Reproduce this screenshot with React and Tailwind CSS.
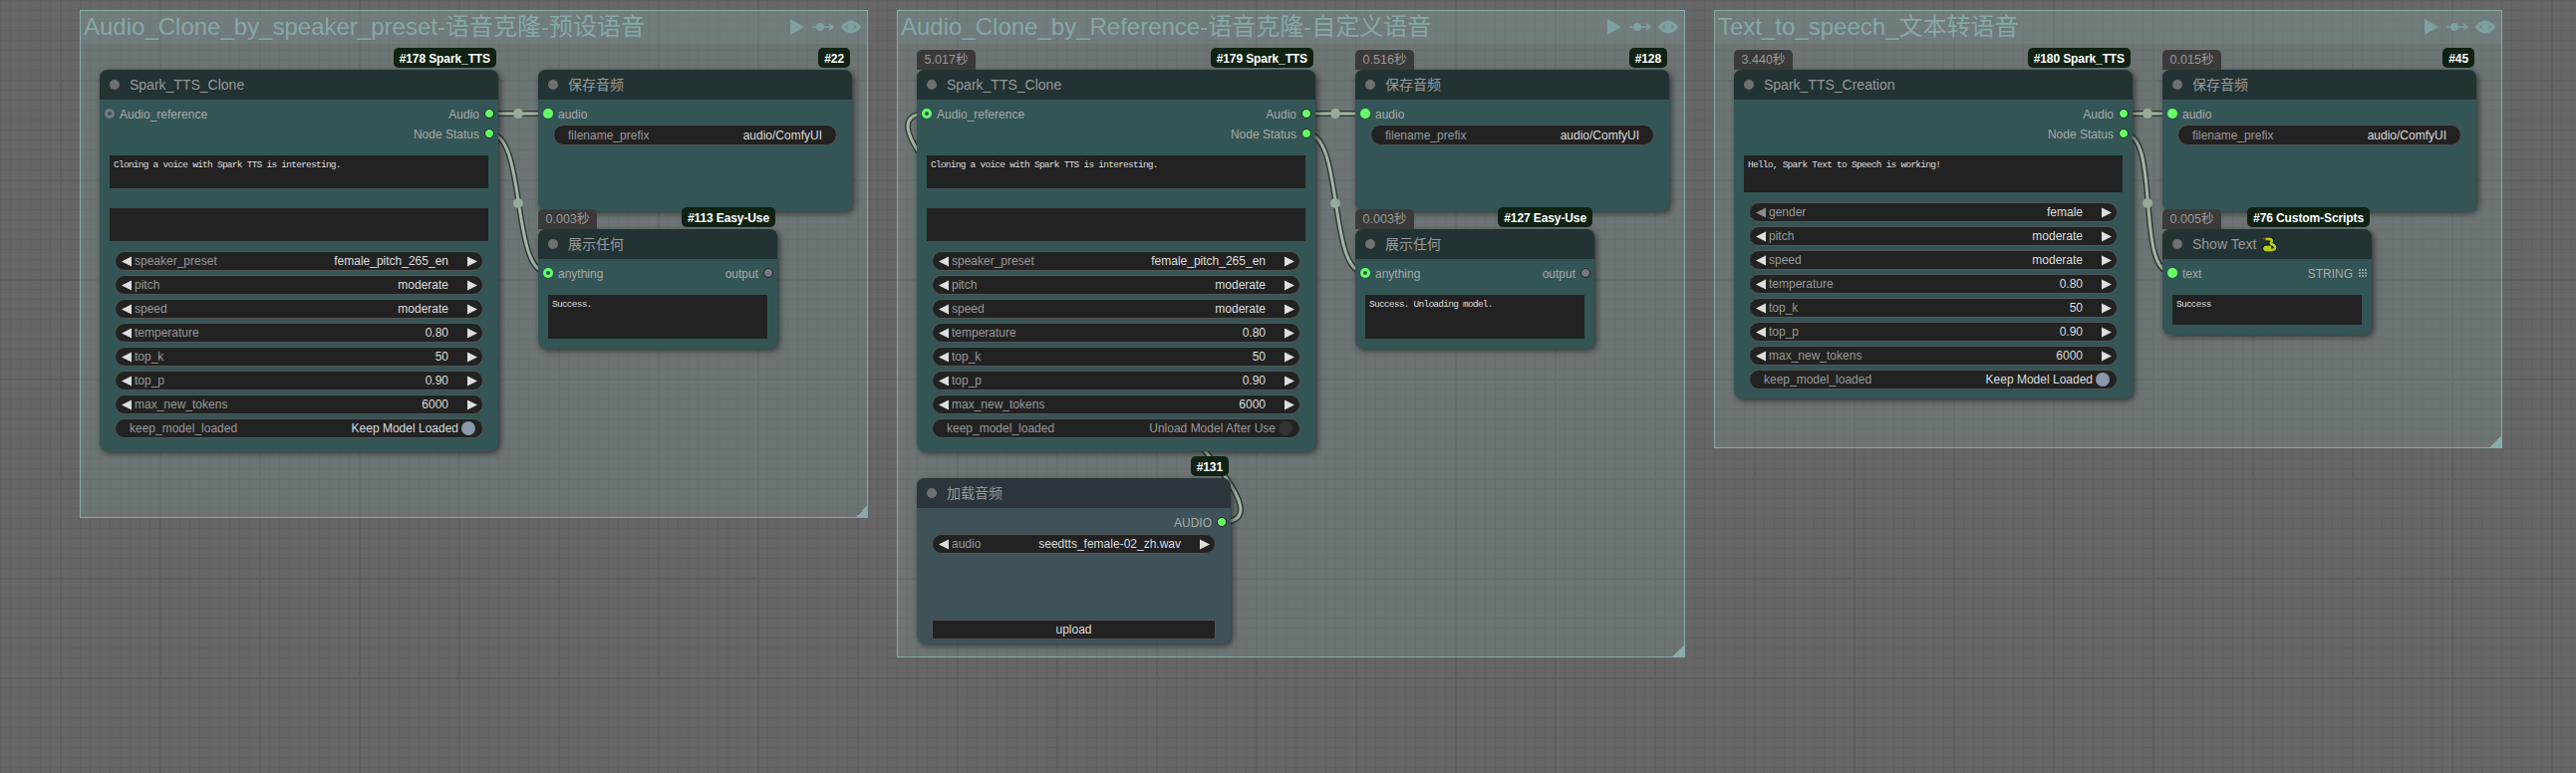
import React from "react";

const FONT = "[font-family:'Liberation_Sans','Noto_Sans_CJK_SC',sans-serif]";

function Triangle({ dir, dim }) {
  return (
    <svg width="10" height="11" viewBox="0 0 10 11" className="shrink-0">
      <polygon points={dir === "l" ? "0,5.5 10,0.5 10,10.5" : "0,0.5 10,5.5 0,10.5"} fill={dim ? "#8a8a8a" : "#dddddd"} />
    </svg>
  );
}

function Widget({ label, value, dimLeft }) {
  return (
    <div className="mx-[15px] mb-[4px] flex h-[20px] items-center rounded-full border border-[#555] bg-[#222] pl-[6px] pr-[5px] text-[12px]">
      <Triangle dir="l" dim={dimLeft} />
      <span className="ml-[3px] text-[#999]">{label}</span>
      <span className="ml-auto text-[#ddd]">{value}</span>
      <span className="ml-[19px]"><Triangle dir="r" /></span>
    </div>
  );
}

function Toggle({ value, on }) {
  return (
    <div className="mx-[15px] flex h-[20px] items-center rounded-full border border-[#555] bg-[#222] pl-[14px] pr-[7px] text-[12px]">
      <span className="text-[#999]">keep_model_loaded</span>
      <span className={on ? "ml-auto text-[#ddd]" : "ml-auto text-[#999]"}>{value}</span>
      <span className={on ? "ml-[3px] h-[14px] w-[14px] rounded-full bg-[#8899aa]" : "ml-[3px] h-[14px] w-[14px] rounded-full bg-[#333]"} />
    </div>
  );
}

function PlainField({ label, value }) {
  return (
    <div className="mx-[15px] mt-[1px] flex h-[21px] items-center justify-between rounded-full border border-[#555] bg-[#222] px-[14px] text-[12px]">
      <span className="text-[#999]">{label}</span>
      <span className="text-[#ddd]">{value}</span>
    </div>
  );
}

function Text({ h, mt = "mt-[12px]", children }) {
  return (
    <div className={`mx-[10px] ${mt} ${h} overflow-hidden bg-[#222] px-[4px] py-[3px] text-[9.5px] leading-[13px] tracking-[-0.75px] text-[#ddd] [font-family:'Liberation_Mono',monospace]`}>
      {children}
    </div>
  );
}

function Dot({ kind }) {
  if (kind === "open")
    return <span className="flex h-[10px] w-[10px] items-center justify-center rounded-full bg-[#778]"><span className="h-[4px] w-[4px] rounded-full bg-[#355]" /></span>;
  if (kind === "in")
    return <span className="flex h-[10px] w-[10px] items-center justify-center rounded-full bg-[#66ff66]" />;
  if (kind === "ring")
    return <span className="flex h-[10px] w-[10px] items-center justify-center rounded-full bg-[#66ff66]"><span className="h-[4px] w-[4px] rounded-full bg-[#355]" /></span>;
  if (kind === "grey")
    return <span className="h-[10px] w-[10px] rounded-full border border-[#222] bg-[#778]" />;
  if (kind === "grid")
    return <span className="mx-[1px] grid h-[8px] w-[8px] grid-cols-3 gap-[1px]">{Array.from({ length: 9 }).map((_, i) => <span key={i} className="bg-[#8a9a9a]" />)}</span>;
  return <span className="h-[10px] w-[10px] rounded-full border border-[#222] bg-[#66ff66]" />;
}

function Slots({ left, right }) {
  return (
    <div className="flex h-[20px] items-center justify-between text-[12px] text-[#aaa]">
      {left ? (
        <div className="flex items-center pl-[5px]">
          <Dot kind={left.kind} />
          <span className="ml-[5px] pt-[1px]">{left.label}</span>
        </div>
      ) : <span />}
      {right ? (
        <div className="flex items-center pr-[4px]">
          <span className="mr-[5px] pt-[1px]">{right.label}</span>
          <Dot kind={right.kind} />
        </div>
      ) : <span />}
    </div>
  );
}

function Snake() {
  const d = "M3.5 3 H7.5 C10 3 10 5 9 6.5 C8 8 11 8 12.5 10 C14 12.5 12 14 10 14 H4 C2 14 2 11 4.5 11 H9";
  return (
    <svg width="15" height="16" viewBox="0 0 15 16" className="ml-[6px]">
      <path d={d} fill="none" stroke="#000" strokeWidth="4.4" />
      <path d={d} fill="none" stroke="#b4cc14" strokeWidth="2.8" />
      <path d="M1 2.5h3" stroke="#c8401c" strokeWidth="1.4" />
    </svg>
  );
}

function Node({ x, y, w, h, title, badge, time, pale, snake, children }) {
  return (
    <section
      className={`absolute rounded-[8px] shadow-[2px_2px_6px_rgba(0,0,0,0.55)] ${pale ? "bg-[#3f5159]" : "bg-[#335555]"}`}
      style={{ left: x, top: y, width: w, height: h }}
    >
      {time && (
        <div className="absolute bottom-full left-0 flex h-[20px] w-[59px] items-center justify-center rounded-t-[5px] bg-[#3a3a3a] text-[12.5px] text-[#999]">{time}</div>
      )}
      <div className="absolute bottom-[calc(100%+2px)] right-[2px] flex h-[20px] items-center rounded-[5px] bg-[#102213] px-[6px] pt-[2px] text-[12px] font-bold tracking-[-0.1px] text-white">{badge}</div>
      <header className={`flex h-[30px] items-center rounded-t-[8px] pl-[10px] text-[14px] text-[#999] ${pale ? "bg-[#2a363b]" : "bg-[#223333]"}`}>
        <span className="h-[10px] w-[10px] rounded-full bg-[#707070]" />
        <span className="ml-[10px]">{title}</span>
        {snake && <Snake />}
      </header>
      <div className="pt-[4px]">{children}</div>
    </section>
  );
}

function Group({ x, w, h, title }) {
  return (
    <section
      className="absolute top-[10px] border border-[#88aaaa] bg-[rgba(136,170,170,0.22)]"
      style={{ left: x, width: w, height: h }}
    >
      <div className="flex h-[33px] items-center justify-between bg-[rgba(136,170,170,0.16)] pb-[2px] pl-[3px] pr-[5px]">
        <span className="text-[24px] leading-[30px] text-[#86a8a8]">{title}</span>
        <span className="flex items-center">
          <svg width="14" height="16" viewBox="0 0 14 16"><polygon points="0,0 14,8 0,16" fill="#7ea0a0" /></svg>
          <svg width="22" height="10" viewBox="0 0 22 10" className="ml-[8px]">
            <path d="M0 5h20M17 2l4 3-4 3" stroke="#7ea0a0" strokeWidth="1.6" fill="none" />
            <circle cx="8" cy="5" r="4" fill="#7ea0a0" />
          </svg>
          <svg width="22" height="16" viewBox="0 0 22 16" className="ml-[6px]">
            <path d="M0.5 8 Q11 -5 21.5 8 Q11 21 0.5 8Z" fill="#7ea0a0" />
            <path d="M5 8 Q11 1 17 8 Q11 15 5 8Z" fill="#6e8c8c" />
            <circle cx="11" cy="8" r="3.4" fill="#7ea0a0" />
          </svg>
        </span>
      </div>
      <span className="absolute bottom-0 right-0 h-[11px] w-[11px] bg-[linear-gradient(135deg,transparent_50%,#88aaaa_50%)]" />
    </section>
  );
}

function Wire({ d, mid }) {
  return (
    <g fill="none">
      <path d={d} stroke="#333a38" strokeWidth="6" />
      <path d={d} stroke="#a3b5a3" strokeWidth="3" />
      {mid && <circle cx={mid[0]} cy={mid[1]} r="5" fill="#98ab98" />}
    </g>
  );
}

const W1 = (ox) => `M${491 + ox} 114H${550 + ox}`;
const W2 = (ox) => `M${491 + ox} 134C${529 + ox} 134 ${512 + ox} 274 ${550 + ox} 274`;

function CloneBody({ speaker, toggle, inputKind, text }) {
  const rows = [
    ["pitch", "moderate"], ["speed", "moderate"], ["temperature", "0.80"],
    ["top_k", "50"], ["top_p", "0.90"], ["max_new_tokens", "6000"],
  ];
  return (
    <>
      <Slots left={{ kind: inputKind, label: "Audio_reference" }} right={{ label: "Audio" }} />
      <Slots right={{ label: "Node Status" }} />
      <Text h="h-[33px]">{text}</Text>
      <Text h="h-[33px]" mt="mt-[20px]" />
      <div className="mt-[10px]">
        <Widget label="speaker_preset" value={speaker} />
        {rows.map(([a, b]) => <Widget key={a} label={a} value={b} />)}
        {toggle}
      </div>
    </>
  );
}

function SaveBody() {
  return (
    <>
      <Slots left={{ kind: "in", label: "audio" }} />
      <PlainField label="filename_prefix" value="audio/ComfyUI" />
    </>
  );
}

function ShowBody({ text }) {
  return (
    <>
      <Slots left={{ kind: "ring", label: "anything" }} right={{ kind: "grey", label: "output" }} />
      <Text h="h-[44px]">{text}</Text>
    </>
  );
}

export default function App() {
  return (
    <div className={`relative h-[776px] w-[2585px] overflow-hidden bg-[#666] ${FONT} [background-image:linear-gradient(90deg,#5e5e5e_2px,transparent_2px),linear-gradient(#5e5e5e_2px,transparent_2px),linear-gradient(90deg,#616161_1px,transparent_1px),linear-gradient(#616161_1px,transparent_1px)] [background-size:100px_100px,100px_100px,10px_10px,10px_10px] [background-position:60px_0,0_80px,0_0,0_0]`}>
      <Group x={80} w={791} h={510} title="Audio_Clone_by_speaker_preset-语音克隆-预设语音" />
      <Group x={900} w={791} h={650} title="Audio_Clone_by_Reference-语音克隆-自定义语音" />
      <Group x={1720} w={791} h={440} title="Text_to_speech_文本转语音" />

      <svg className="absolute left-0 top-0" width="2585" height="776">
        <Wire d={W1(0)} mid={[520, 114]} />
        <Wire d={W2(0)} mid={[520, 204]} />
        <Wire d={W1(820)} mid={[1340, 114]} />
        <Wire d={W2(820)} mid={[1340, 204]} />
        <Wire d="M1226 524C1352 524 804 114 930 114" />
        <Wire d="M2131 114H2180" mid={[2155, 114]} />
        <Wire d="M2131 134C2169 134 2142 274 2180 274" mid={[2155, 204]} />
      </svg>

      <Node x={100} y={70} w={400} h={383} title="Spark_TTS_Clone" badge="#178 Spark_TTS">
        <CloneBody inputKind="open" speaker="female_pitch_265_en" text="Cloning a voice with Spark TTS is interesting." toggle={<Toggle value="Keep Model Loaded" on />} />
      </Node>
      <Node x={540} y={70} w={315} h={142} title="保存音频" badge="#22"><SaveBody /></Node>
      <Node x={540} y={230} w={240} h={120} title="展示任何" badge="#113 Easy-Use" time="0.003秒"><ShowBody text="Success." /></Node>

      <Node x={920} y={70} w={400} h={383} title="Spark_TTS_Clone" badge="#179 Spark_TTS" time="5.017秒">
        <CloneBody inputKind="ring" speaker="female_pitch_265_en" text="Cloning a voice with Spark TTS is interesting." toggle={<Toggle value="Unload Model After Use" />} />
      </Node>
      <Node x={1360} y={70} w={315} h={142} title="保存音频" badge="#128" time="0.516秒"><SaveBody /></Node>
      <Node x={1360} y={230} w={240} h={120} title="展示任何" badge="#127 Easy-Use" time="0.003秒"><ShowBody text="Success. Unloading model." /></Node>
      <Node x={920} y={480} w={315} h={166} title="加载音频" badge="#131" pale>
        <Slots right={{ label: "AUDIO" }} />
        <div className="mt-[2px]"><Widget label="audio" value="seedtts_female-02_zh.wav" /></div>
        <div className="mx-[15px] mt-[66px] flex h-[20px] items-center justify-center border border-[#555] bg-[#222] text-[12px] text-[#ddd]">upload</div>
      </Node>

      <Node x={1740} y={70} w={400} h={330} title="Spark_TTS_Creation" badge="#180 Spark_TTS" time="3.440秒">
        <Slots right={{ label: "Audio" }} />
        <Slots right={{ label: "Node Status" }} />
        <Text h="h-[37px]">Hello, Spark Text to Speech is working!</Text>
        <div className="mt-[10px]">
          <Widget label="gender" value="female" dimLeft />
          <Widget label="pitch" value="moderate" />
          <Widget label="speed" value="moderate" />
          <Widget label="temperature" value="0.80" />
          <Widget label="top_k" value="50" />
          <Widget label="top_p" value="0.90" />
          <Widget label="max_new_tokens" value="6000" />
          <Toggle value="Keep Model Loaded" on />
        </div>
      </Node>
      <Node x={2170} y={70} w={315} h={142} title="保存音频" badge="#45" time="0.015秒"><SaveBody /></Node>
      <Node x={2170} y={230} w={210} h={106} title="Show Text" badge="#76 Custom-Scripts" time="0.005秒" snake>
        <Slots left={{ kind: "in", label: "text" }} right={{ kind: "grid", label: "STRING" }} />
        <Text h="h-[30px]">Success</Text>
      </Node>
    </div>
  );
}
